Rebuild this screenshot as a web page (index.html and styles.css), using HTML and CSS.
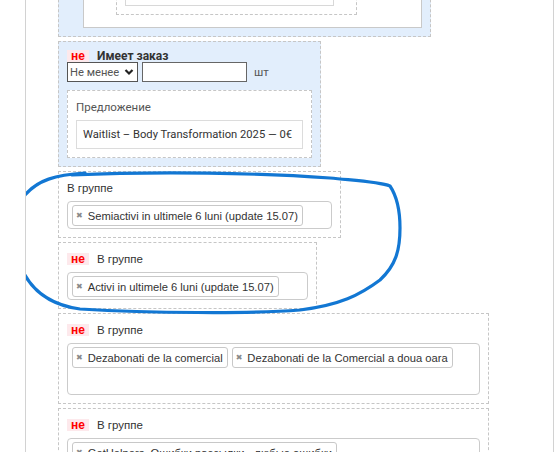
FILE: index.html
```
<!DOCTYPE html>
<html lang="ru">
<head>
<meta charset="utf-8">
<title>Условия</title>
<link rel="stylesheet" href="styles.css">
</head>
<body>
<div class="page">
  <div class="cond blue c1">
    <div class="wbox">
      <div class="dbox">
        <div class="ibox"></div>
      </div>
    </div>
  </div>

  <div class="cond blue c2">
    <div class="head small"><span class="neg">не</span><span class="title">Имеет заказ</span></div>
    <div class="qty">
      <div class="sel">Не менее<svg width="10" height="8" viewBox="0 0 10 8"><path d="M1.5 2 L5 5.5 L8.5 2" fill="none" stroke="#222" stroke-width="2.2"/></svg></div>
      <div class="num"></div>
      <span class="unit">шт</span>
    </div>
    <div class="sub">
      <div class="lbl">Предложение</div>
      <div class="field">Waitlist – Body Transformation 2025 — 0€</div>
    </div>
  </div>

  <div class="cond c3">
    <div class="head"><span class="grp">В группе</span></div>
    <div class="tags"><span class="tag"><span class="x">✖</span>Semiactivi in ultimele 6 luni (update 15.07)</span></div>
  </div>

  <div class="cond c4">
    <div class="head"><span class="neg">не</span><span class="grp">В группе</span></div>
    <div class="tags"><span class="tag"><span class="x">✖</span>Activi in ultimele 6 luni (update 15.07)</span></div>
  </div>

  <div class="cond c5">
    <div class="head"><span class="neg">не</span><span class="grp">В группе</span></div>
    <div class="tags tall"><span class="tag"><span class="x">✖</span>Dezabonati de la comercial</span><span class="tag"><span class="x">✖</span>Dezabonati de la Comercial a doua oara</span></div>
  </div>

  <div class="cond c5">
    <div class="head"><span class="neg">не</span><span class="grp">В группе</span></div>
    <div class="tags tall"><span class="tag"><span class="x">✖</span>GetHelpers. Ошибки рассылки - любые ошибки</span></div>
  </div>

  <svg class="mark" width="558" height="452" viewBox="0 0 558 452">
    <path d="M72 175 C160 171 260 173 330 178 C360 181 380 182 390 186 C396 195 400 210 400 228 C400 250 396 265 380 280 C360 295 340 305 300 310 C250 314 150 313 80 309 C50 305 30 290 20 265 C12 245 12 215 25 195 C38 180 55 175 85 173" fill="none" stroke="#1277d3" stroke-width="3.2" stroke-linecap="round" stroke-linejoin="round"/>
  </svg>
</div>
</body>
</html>
```
FILE: styles.css
```
* { box-sizing: border-box; }
html, body { margin: 0; padding: 0; background: #fff; }
body { font-family: "Liberation Sans", Arial, sans-serif; font-size: 12px; color: #333; }

.page {
  position: relative;
  margin-left: 25px;
  width: 529px;
  height: 452px;
  border-left: 1px solid #d2d2d2;
  border-right: 1px solid #d2d2d2;
  padding-left: 32px;
  overflow: hidden;
}

.cond {
  border: 1px dashed #c6c6c6;
  padding: 8px;
  margin-bottom: 4px;
  background: #fff;
}
.blue { background: #e2eefc; }

.c1 { width: 373px; margin-top: -60px; padding-left: 24px; }
.wbox { background: #fff; border: 1px solid #c9c9c9; padding: 8px 0 12px 32px; }
.dbox { width: 241px; border: 1px dashed #c6c6c6; padding: 8px 22px 8px 8px; }
.ibox { height: 39px; border: 1px solid #d8d8d8; }

.c2 { width: 263px; }
.c3 { width: 283px; }
.c4 { width: 259px; }
.c5 { width: 431px; }

.head { display: flex; align-items: center; height: 16px; margin-bottom: 5px; }
.head.small { height: 12px; margin-bottom: 0; }
.neg {
  display: inline-block;
  width: 22px;
  height: 12px;
  line-height: 12px;
  background: #fde9ec;
  color: #f00;
  font-family: "Liberation Sans", sans-serif;
  font-weight: 700;
  font-size: 12px;
  text-align: center;
  margin-right: 8px;
}
.title { font-family: Roboto, "Liberation Sans", sans-serif; font-weight: 700; font-size: 12px; color: #333; }
.grp { font-size: 11.5px; color: #333; }

.qty { display: flex; align-items: center; }
.sel {
  width: 71px; height: 20px;
  border: 1px solid #555;
  background: #fff;
  display: flex; align-items: center; justify-content: space-between;
  padding: 0 3px 0 2px;
  font-family: Roboto, "Liberation Sans", sans-serif;
  font-size: 11.2px; color: #555;
  white-space: nowrap;
}
.num { width: 105px; height: 20px; border: 1px solid #666; background: #fff; margin-left: 4px; }
.unit { margin-left: 7px; font-family: Roboto, "Liberation Sans", sans-serif; font-size: 11.5px; color: #555; }

.sub { margin-top: 8px; width: 245px; background: #fff; border: 1px dashed #c6c6c6; padding: 8px; }
.lbl { height: 16px; line-height: 16px; margin-bottom: 5px; font-family: Roboto, "Liberation Sans", sans-serif; font-size: 11.5px; color: #555; }
.field {
  height: 29px; border: 1px solid #dcdcdc; padding: 0 6px;
  display: flex; align-items: center;
  font-family: Roboto, "Liberation Sans", sans-serif; font-size: 11.2px; color: #333;
  white-space: nowrap; overflow: hidden;
}

.tags {
  display: flex; flex-wrap: wrap; align-items: flex-start; gap: 4px;
  border: 1px solid #cbcbcb; border-radius: 4px;
  padding: 3px 4px 2px 4px;
  min-height: 28px;
}
.tags.tall { min-height: 52px; }
.tag {
  display: inline-flex; align-items: center;
  height: 21px;
  border: 1px solid #c8c8c8; border-radius: 3px;
  padding: 0 4px 0 3px;
  background: #fff;
  color: #333; font-size: 11.2px; white-space: nowrap;
}
.x { color: #8a8a8a; font-family: "DejaVu Sans", sans-serif; font-size: 8px; margin-right: 5px; }

.mark { position: absolute; left: -26px; top: 0; pointer-events: none; }
```
